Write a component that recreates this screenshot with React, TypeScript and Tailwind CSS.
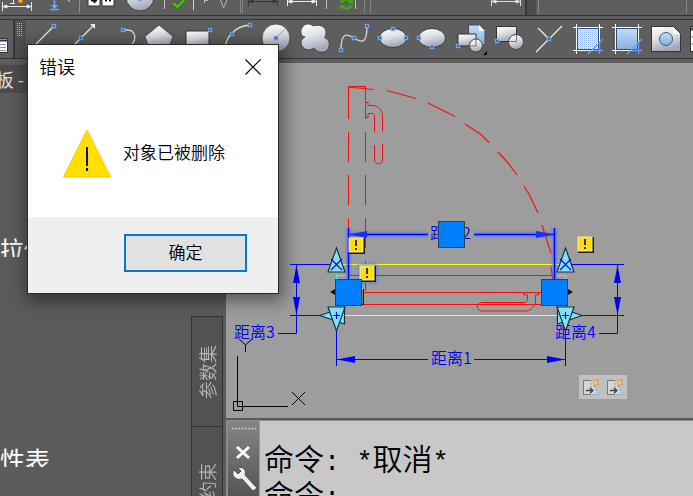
import type { ReactNode } from "react";

const CJK = "font-['Noto_Sans_CJK_SC',sans-serif]";

function Tool({ label, box, width, height, children }: { label: string; box: string; width: number; height: number; children?: ReactNode }) {
  return (
    <button type="button" aria-label={label} className="block shrink-0">
      <svg width={width} height={height} viewBox={box} className="block">
        {children}
      </svg>
    </button>
  );
}

/** Small blue grip square centred on a point. */
function Grip({ x, y }: { x: number; y: number }) {
  return <rect x={x - 1.5} y={y - 1.5} width="3" height="3" fill="#33415f" stroke="#6ea6f5" strokeWidth="1.4" />;
}

function Dimension({ x, y, color }: { x: number; y: number; color: string }) {
  return (
    <g stroke={color} fill={color} strokeWidth="1">
      <path d={`M${x + 0.5} ${y - 4}v9M${x + 29.5} ${y - 4}v9M${x} ${y + 0.5}h30`} />
      <path d={`M${x + 1} ${y + 0.5}l4-1.5v3zM${x + 29} ${y + 0.5}l-4-1.5v3z`} />
    </g>
  );
}

function Divider({ className }: { className: string }) {
  return <span className={`block shrink-0 border-l ${className}`} />;
}

function Defs() {
  return (
    <svg width="0" height="0" className="absolute">
      <defs>
        <linearGradient id="metal" x1="0" y1="0" x2="0.3" y2="1">
          <stop offset="0" stopColor="#ffffff" />
          <stop offset="0.5" stopColor="#dfe1e6" />
          <stop offset="1" stopColor="#a2a8ba" />
        </linearGradient>
        <linearGradient id="sky" x1="0" y1="0" x2="0" y2="1">
          <stop offset="0" stopColor="#c3dcf6" />
          <stop offset="1" stopColor="#86aede" />
        </linearGradient>
        <pattern id="hatch" width="2" height="2" patternUnits="userSpaceOnUse">
          <rect width="2" height="2" fill="#eaf2fe" />
          <rect width="1" height="1" fill="#8fb6ec" />
          <rect x="1" y="1" width="1" height="1" fill="#b9d3f5" />
        </pattern>
        <filter id="glow" x="-50%" y="-50%" width="200%" height="200%">
          <feGaussianBlur stdDeviation="1.6" />
        </filter>
      </defs>
    </svg>
  );
}

function UpperToolbar() {
  return (
    <div className="flex h-4 shrink-0 overflow-hidden border-b border-[#353535] bg-[#5e5e5e]">
      <Tool label="动态标注" box="0 0 35 15" width={35} height={15}>
        <Dimension x={2} y={6} color="#e6e6e6" />
        <path d="M10 3.500h5M13.500 0v3" stroke="#e6e6e6" />
        <rect x="18" y="-3" width="5" height="6" fill="#f3b23a" stroke="#8f5a12" />
      </Tool>
      <Tool label="纵坐标" box="35 0 44 15" width={44} height={15}>
        <path d="M54.500 0v8M50 9.500h9" stroke="#6ea6f5" strokeWidth="1.500" />
        <path d="M51 5h7l-3.500 4z" fill="#6ea6f5" />
        <path d="M68 0l2 1.500" stroke="#dddddd" />
      </Tool>
      <Divider className="h-[13px] w-1 border-[#8b8b8b]" />
      <Tool label="公差" box="83 0 37 15" width={37} height={15}>
        <path d="M88 -4h12v10H88zM102 -4h12v10h-12z" fill="#fff" stroke="#333" />
        <path d="M91 .5h6M94.500 0v3M105 .5h2M109 .5h2" stroke="#111" strokeWidth="2" />
      </Tool>
      <Tool label="圆心标记" box="120 0 44 15" width={44} height={15}>
        <circle cx="140" cy="-3" r="14" fill="url(#metal)" stroke="#404040" />
        <path d="M138 0h4" stroke="#6ea6f5" strokeWidth="2" />
      </Tool>
      <Divider className="h-[9px] w-1 border-[#bdbdbd]" />
      <Tool label="检验" box="168 0 25 15" width={25} height={15}>
        <path d="M173 3l4.500 4L185 -1" fill="none" stroke="#267407" strokeWidth="4" />
        <path d="M173 3l4.500 4L185 -1" fill="none" stroke="#55b81c" strokeWidth="2.500" />
      </Tool>
      <Divider className="h-[10px] w-1 border-[#d5d5d5]" />
      <Tool label="折弯线性" box="197 0 43 15" width={43} height={15}>
        <path d="M204.500 0v3M205 .5h3M220.500 0l3 8 4-9" fill="none" stroke="#b9b9b9" />
      </Tool>
      <Divider className="h-[13px] w-0.5 border-[#858585]" />
      <Divider className="h-[13px] w-1 border-[#858585]" />
      <Tool label="编辑标注" box="246 0 39 15" width={39} height={15}>
        <Dimension x={248} y={1} color="#35373b" />
      </Tool>
      <Tool label="编辑标注文字" box="285 0 41 15" width={41} height={15}>
        <Dimension x={287} y={1} color="#eeeeee" />
      </Tool>
      <Divider className="h-[9px] w-2 border-[#bdbdbd]" />
      <Tool label="标注更新" box="334 0 21 15" width={21} height={15}>
        <path d="M341.500 3c1-4 7-5 9-1M351.500 5c-1 4-7 5-9 1" fill="none" stroke="#42a50d" strokeWidth="2.500" />
        <path d="M347 3.500h6v-5zM346 5h-6v5z" fill="#42a50d" />
      </Tool>
      <Divider className="h-[9px] w-[9px] border-[#bdbdbd]" />
      <Divider className="h-[13px] w-1.5 border-[#858585]" />
      <Divider className="h-[13px] w-[118px] border-[#858585]" />
      <Tool label="标注样式" box="488 0 37 15" width={37} height={15}>
        <Dimension x={491} y={1} color="#dddddd" />
      </Tool>
      <span className="h-full w-[11px] shrink-0 border-l-2 border-[#353535] bg-[#4c4c4c]" />
      <span className="mx-0.5 h-[13px] w-0 shrink grow border-x border-[#898989]" />
      <span className="w-1 shrink-0" />
    </div>
  );
}

function HatchIcon({ x, fill }: { x: number; fill: string }) {
  return (
    <g>
      <rect x={x - 10.5} y="28.5" width="21" height="21" fill={fill} stroke="#334a73" />
      <path d={`M${x - 11.5} 24v30M${x + 11.5} 24v26M${x - 15} 27.500h30M${x - 15} 50.500h21`} stroke="#fff" />
      <path d={`M${x} 54l15-15M${x + 11.5} 43v11M${x + 5} 50.500h10`} stroke="#6a9ef0" strokeWidth="1.300" />
    </g>
  );
}

const drawTools: { label: string; art: ReactNode }[] = [
  { label: "直线", art: <><path d="M28 52L53 27" stroke="#ececec" strokeWidth="1.300" /><Grip x={54} y={26} /></> },
  { label: "构造线", art: <><path d="M70 49L93 26" stroke="#ececec" strokeWidth="1.300" /><path d="M95 24v5l-5-5z" fill="#ececec" /><Grip x={81} y={38} /></> },
  { label: "多段线", art: <><path d="M123 30h4c9 0 10 10 4 15" fill="none" stroke="#dcdcdc" strokeWidth="1.300" /><Grip x={123} y={30} /></> },
  { label: "多边形", art: <path d="M159 25l14 11.500L168 50h-18l-5-13.500z" fill="url(#metal)" stroke="#3c3c3c" strokeWidth=".8" /> },
  { label: "矩形", art: <><path d="M186 31h23v19h-23z" fill="url(#metal)" stroke="#333" /><Grip x={210} y={30} /></> },
  { label: "圆弧", art: <><path d="M225 48c1-11 10-22 25-23" fill="none" stroke="#dcdcdc" strokeWidth="1.300" /><Grip x={232} y={34} /><Grip x={250} y={25} /></> },
  { label: "圆", art: <><circle cx="276" cy="38" r="14" fill="url(#metal)" stroke="#3c3c3c" strokeWidth=".8" /><path d="M276 38l10-10" stroke="#6ea6f5" /><Grip x={276} y={38} /></> },
  { label: "修订云线", art: <path d="M302 36c-3-6 1-12 6-12 3 0 4 1 5 2 5-2 13 0 13 6 0 3-1 4-1 6 5 2 5 7 3 11-3 5-11 4-14-1-4 3-10 2-12-2-2-5 0-7 3-9z" fill="url(#metal)" stroke="#3c3c3c" strokeWidth=".8" /> },
  { label: "样条曲线", art: <><path d="M341 50c0-17 5-17 13-12s13 6 13-12" fill="none" stroke="#d2d2d2" strokeWidth="1.400" /><Grip x={341} y={50} /><Grip x={354} y={38} /><Grip x={367} y={26} /></> },
  { label: "椭圆", art: <><ellipse cx="393" cy="38" rx="13.500" ry="9.500" fill="url(#metal)" stroke="#3c3c3c" /><Grip x={380} y={38} /><Grip x={406} y={38} /><Grip x={393} y={29} /></> },
  { label: "椭圆弧", art: <><ellipse cx="432" cy="38" rx="13.500" ry="9.500" fill="url(#metal)" stroke="#3c3c3c" /><Grip x={419} y={38} /><Grip x={432} y={47} /></> },
  {
    label: "插入块",
    art: (
      <>
        <path d="M468.500 25h11l5.500 6v14h-16.500z" fill="url(#sky)" stroke="#3a4a66" />
        <path d="M479 25v6h6z" fill="#fff" />
        <path d="M458 34h18v12h-18z" fill="url(#metal)" stroke="#333" />
        <circle cx="476" cy="45.500" r="6.500" fill="url(#metal)" stroke="#444" />
        <path d="M476 40v6h-6" fill="none" stroke="#777" />
        <Grip x={458} y={46} />
        <path d="M487 51v4h-4z" fill="#000" />
      </>
    ),
  },
  {
    label: "创建块",
    art: (
      <>
        <path d="M496.500 26.500h20v15h-20z" fill="url(#metal)" stroke="#333" />
        <circle cx="516" cy="42" r="7.500" fill="url(#metal)" stroke="#444" />
        <path d="M516.500 35v6.500h-7" fill="none" stroke="#777" />
        <Grip x={497} y={41} />
      </>
    ),
  },
  { label: "点", art: <><path d="M536 52l26-26M538 28l11 11" stroke="#ececec" strokeWidth="1.300" /><Grip x={549} y={39} /></> },
  { label: "图案填充", art: <HatchIcon x={588} fill="url(#hatch)" /> },
  { label: "渐变色", art: <HatchIcon x={627} fill="url(#sky)" /> },
  { label: "面域", art: <><path d="M651.500 26.500h22l7 7v18h-29z" fill="url(#metal)" stroke="#333" /><path d="M673 27v7h7z" fill="#fff" /><circle cx="666" cy="39" r="6.500" fill="url(#sky)" stroke="#41587d" /></> },
  { label: "表格", art: <><path d="M690.500 26.500h24v25h-24z" fill="#fff" stroke="#333" /><path d="M691 29h20" stroke="#4d4d4d" strokeWidth="3" /><path d="M691 37h20M691 44h20" stroke="#888" /></> },
];

function DrawToolbar() {
  return (
    <div className="mt-[3px] flex h-10 shrink-0 overflow-hidden border-y border-[#353535] bg-[#5e5e5e]">
      <Tool label="图层" box="0 20 13 38" width={13} height={38}>
        <path d="M-8 38.500H7.500v14H-8z" fill="#fff" stroke="#333" />
        <path d="M0 40.500h7" stroke="#26345c" strokeWidth="2" />
        <path d="M0 44.500h6M0 47.500h6M0 50.500h6" stroke="#7d96bd" />
      </Tool>
      <div className="flex w-[13px] shrink-0 border-l-2 border-[#353535] bg-[#505050]">
        <svg width="11" height="38" viewBox="0 0 11 38">
          <path d="M2.500 3v13M4.500 3v13M6.500 3v13" stroke="#b5b5b5" strokeWidth="1" strokeDasharray="1 1" />
        </svg>
      </div>
      {drawTools.map((t, i) => (
        <Tool key={t.label} label={t.label} box={`${26 + 39 * i} 20 39 38`} width={39} height={38}>
          {t.art}
        </Tool>
      ))}
    </div>
  );
}

function Palette() {
  return (
    <aside className={`flex w-[226px] shrink-0 bg-[#5b5b5b] text-white ${CJK}`}>
      <div className="flex min-w-0 flex-1 flex-col">
        <div className="mt-0.5 flex h-7 items-center justify-start bg-[#4c4c4c]">
          <span className="flex w-6 shrink-0 justify-end text-lg leading-7 whitespace-nowrap text-[#e0e0e0]">板 -</span>
        </div>
        <div className="mt-[142px] flex h-[22px] w-12 justify-end overflow-hidden text-2xl leading-7 whitespace-nowrap">拉伸</div>
        <div className="mt-[188px] flex h-[22px] w-[50px] justify-end overflow-hidden text-[25px] leading-7 whitespace-nowrap">性表</div>
      </div>
      <div className="mt-[253px] flex w-[35px] shrink-0 flex-col text-lg font-[350] text-[#b4b4b4]">
        <button type="button" className="flex h-[111px] w-8 items-center justify-center border border-[#333] bg-[#525252]">
          <span className="rotate-180 leading-6 [text-orientation:sideways] [writing-mode:vertical-rl]">参数集</span>
        </button>
        <button type="button" className="flex w-8 flex-1 items-start justify-center overflow-hidden border-x border-[#333] bg-[#525252] pt-9">
          <span className="rotate-180 leading-6 whitespace-nowrap [text-orientation:sideways] [writing-mode:vertical-rl]">约束</span>
        </button>
      </div>
    </aside>
  );
}

function Alert({ x, y }: { x: number; y: number }) {
  return (
    <g>
      <rect x={x} y={y} width="16" height="16" fill="#1d1d1d" />
      <rect x={x} y={y} width="14" height="14" fill="#ffdc14" stroke="#f5eaa8" />
      <path d={`M${x + 7} ${y + 2}v6M${x + 7} ${y + 10}v2`} stroke="#333" strokeWidth="2" />
    </g>
  );
}

function GripBox({ x, y }: { x: number; y: number }) {
  return <rect x={x + 0.5} y={y + 0.5} width="26" height="26" fill="#0080ff" stroke="#2f4252" />;
}

function Drawing() {
  return (
    <svg width="467" height="355" viewBox="226 63 467 355" className={`block shrink-0 ${CJK}`}>
      <g fill="none" stroke="#ff0d0d" strokeWidth="1">
        <path d="M348 86.500h18M348.500 86v33M365.500 86v33M348.500 132v30M365.500 132v30M348.500 175v30M365.500 175v30M348.500 218v20M365.500 218v30M365.500 261v30" />
        <path d="M366 102.500h2v3h6c5 1 8 5 8.500 10v16M366 117.500h2v-4h5l1.500 2v17M374.500 145v15c0 5 8 5 8 0v-16" />
        <path strokeWidth="1.200" d="M348 87l26 2.500M387 90.500l29 8M428 103l27 13.500M465 124l16 10.500 8 8M498 152l10 11 9 12M524 186l6 10 8 17M542 225l9 28M551 267l2 13" />
        <path d="M523.500 292v3h4v5l-2 2.500h-45l-3 3v3l3 2.500h46c5-1 8-5 9-9v-7h3v-3" />
      </g>
      <g fill="#ff0d0d">
        <rect x="349" y="275" width="205" height="1" />
        <rect x="362" y="292" width="180" height="1" />
        <rect x="362" y="304" width="180" height="1" />
      </g>
      <g fill="#ffff10">
        <rect x="337" y="264" width="228" height="1" />
        <rect x="337" y="315" width="228" height="1" />
      </g>
      <path d="M348 275.500h-11.500v6M555 275.500h10.500v6" fill="none" stroke="#2ff" />

      <g stroke="#3f78ff" strokeWidth="5" fill="none" opacity=".6" filter="url(#glow)">
        <path d="M348.500 228v52M554.500 228v52M350 234.500h78M474 234.500h79" />
        <rect x="360" y="266" width="15" height="15" />
      </g>
      <g stroke="#0000ff" fill="none">
        <path d="M290 264.500h40M290 315.500h46M296.500 264v69.500H278" />
        <path d="M571 264.500h53M575 315.500h49M617.500 264v69.500H599" />
        <path d="M336 359.500h92M474 359.500h92M336.500 330v36M565.500 330v36" />
        <path d="M350 234.500h78M474 234.500h80" strokeWidth="1.300" />
        <path d="M348.500 228v52M554.500 228v52" strokeWidth="1.500" />
      </g>
      <g fill="#0000ff">
        <path d="M296.500 265l3.500 18h-7zM296.500 315l3.500-18h-7zM617.500 265l3.500 18h-7zM617.500 315l3.500-18h-7z" />
        <path d="M337 359.500l18-3.500v7zM565 359.500l-18-3.500v7z" />
        <path d="M349 234.500l18-3.500v7zM554 234.500l-18-3.500v7z" fill="#1c2df5" />
        <g className="text-base font-[350]">
          <text x="234" y="338">距离3</text>
          <text x="555" y="338">距离4</text>
          <text x="431" y="364">距离1</text>
          <text x="430" y="239">距离2</text>
        </g>
      </g>
      <Alert x={349} y={238} />
      <Alert x={360} y={266} />
      <Alert x={578} y={237} />
      <Alert x={348} y={289} />
      <g stroke="#12343f" fill="#80e2ff" strokeWidth="1.200">
        <path d="M320 315.500l24.500-8.500v17zM582 315.500l-24.500-8.500v17z" />
        <path d="M336.500 248l8.500 24h-17zM565.500 248l8.500 24h-17z" />
        <path d="M336.500 331l8.500-24h-17zM565.500 331l8.500-24h-17z" />
      </g>
      <path
        d="M331 259l11 11M342 259l-11 11M560 259l11 11M571 259l-11 11M333 315.500h7M336.500 312v7M562 315.500h7M565.500 312v7"
        stroke="#0000ff"
        strokeWidth="1.200"
      />
      <path d="M330 292l5-3v6zM573 292l-5-3v6z" fill="#111" />
      <GripBox x={335} y={279} />
      <GripBox x={541} y={279} />
      <GripBox x={438} y={221} />
      <g fill="none" stroke="#000" strokeWidth="1">
        <path d="M233.500 401.500h9v9h-9zM237.500 356v50.500H288M292 392l13 13M305 392l-13 13M239 339l6.500 6 6.500-6M245.500 345v7" />
      </g>
    </svg>
  );
}

function InsertIcon() {
  return (
    <svg width="24" height="24" viewBox="0 0 24 24">
      <path d="M12 5.500H4.500v14H12" fill="#d6d6d6" stroke="#777" />
      <path d="M12 5h3v5l4 9.500h-7z" fill="#c8d9e4" />
      <path d="M12 5v14M16 11l3.500 8.500H13" fill="none" stroke="#7fa5bf" strokeDasharray="2 1" />
      <path d="M7 15.500h6M11 13l3 2.500-3 2.500" fill="none" stroke="#444" strokeWidth="1.300" />
      <path d="M14 5l3 1 2-2-1 3 2 3-3-1-2 3v-4z" fill="#ffd78a" stroke="#d48b2d" strokeWidth=".8" />
    </svg>
  );
}

function Mono({ children }: { children: ReactNode }) {
  return <span className="font-['Liberation_Mono',monospace] text-[27px] leading-none">{children}</span>;
}

function CommandLine() {
  return (
    <section className="flex h-[78px] shrink-0 overflow-hidden border-t-2 border-[#5a5a5a] bg-[#8b8b8b] pt-px pl-0.5">
      <div className="flex w-8 shrink-0 flex-col items-center border-r border-[#999] bg-linear-to-b from-[#858585] to-[#555]">
        <svg width="28" height="20" viewBox="0 0 28 20">
          <path d="M1 8h26" stroke="#c5c5c5" strokeWidth="2" strokeDasharray="2 1.500" />
        </svg>
        <button type="button" aria-label="关闭命令行">
          <svg width="30" height="26" viewBox="0 0 30 26" className="block">
            <path d="M8 7l12 11M20 7L8 18" stroke="#fff" strokeWidth="3" />
          </svg>
        </button>
        <button type="button" aria-label="自定义">
          <svg width="30" height="30" viewBox="0 0 30 30" className="block">
            <path d="M5 11c-2-3-1-6 0-7l4 4 3-3-3-3c5-2 9 2 7 7l12 13-4 3-11-12c-3 1-6 0-8-2z" fill="#edf0f5" stroke="#4b505a" />
          </svg>
        </button>
      </div>
      <div className={`min-w-0 flex-1 bg-[#c8c8c8] pt-[18px] pl-1 text-[30px] leading-9 font-[350] whitespace-pre text-black ${CJK}`}>
        <p className="h-9">命令<Mono>: *</Mono>取消<Mono>*</Mono></p>
        <p className="h-9">命令<Mono>:</Mono></p>
      </div>
    </section>
  );
}

function ErrorDialog() {
  return (
    <div
      role="alertdialog"
      aria-labelledby="err-title"
      aria-describedby="err-text"
      className={`absolute top-11 left-[27px] flex w-[252px] flex-col border border-[#2b2b2b] bg-white text-black shadow-[2px_4px_16px_3px_rgba(0,0,0,0.45)] ${CJK}`}
    >
      <div className="flex h-11 items-center justify-between pr-[17px] pl-[11px]">
        <h1 id="err-title" className="pb-0.5 text-lg leading-6 font-[350]">错误</h1>
        <button type="button" aria-label="关闭">
          <svg width="16" height="16" viewBox="0 0 16 16" className="block">
            <path d="M.5 .5l15 15M15.500 .5l-15 15" stroke="#000" strokeWidth="1.200" />
          </svg>
        </button>
      </div>
      <div className="flex h-32 items-start gap-3 pt-10 pl-[35px]">
        <svg width="48" height="49" viewBox="0 0 48 49" className="shrink-0">
          <path d="M24 1l23.500 47H.5z" fill="#ffe000" stroke="#ffc20a" />
          <path d="M24 18v19M24 39v3" stroke="#111" strokeWidth="2" />
        </svg>
        <p id="err-text" className="pt-[11px] text-[17px] leading-6 font-[350]">对象已被删除</p>
      </div>
      <div className="flex h-[76px] items-center justify-end bg-[#efefef] pr-[31px] pb-1">
        <button type="button" className="h-[38px] w-[123px] border-2 border-[#0078d7] bg-[#e1e1e1] pb-0.5 text-[17px] leading-6 font-[350]">确定</button>
      </div>
    </div>
  );
}

export default function App() {
  return (
    <div className="relative flex h-screen flex-col overflow-hidden bg-[#5e5e5e]">
      <Defs />
      <UpperToolbar />
      <DrawToolbar />
      <div className="mt-1 flex min-h-0 flex-1">
        <Palette />
        <main className="flex min-w-0 flex-1 flex-col">
          <div className="relative min-h-0 flex-1 overflow-hidden bg-[#9d9d9d]">
            <Drawing />
            <div className="absolute top-[312px] left-[353px] flex bg-[#c1c1c1]">
              <button type="button" aria-label="插入到前面"><InsertIcon /></button>
              <button type="button" aria-label="插入到后面"><InsertIcon /></button>
            </div>
          </div>
          <CommandLine />
        </main>
      </div>
      <ErrorDialog />
    </div>
  );
}
